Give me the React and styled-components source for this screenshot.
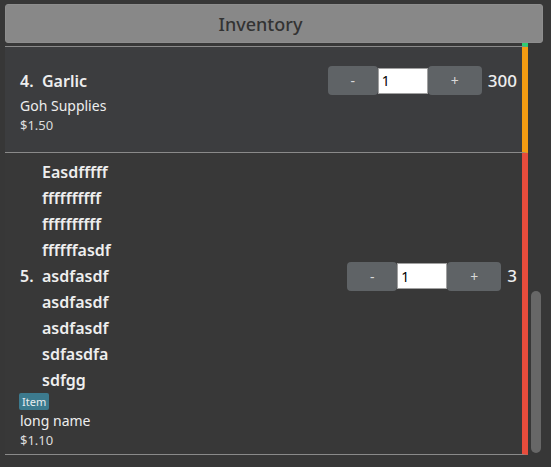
import { useLayoutEffect, useRef, useState } from 'react';
import styled, { createGlobalStyle } from 'styled-components';

const items = [
    { id: 1, name: 'Apples', tag: 'Fruit', supplier: 'Fresh Farm', price: '$0.80', qty: 120, color: '#2ecc71' },
    {
        id: 2,
        name: 'Tomato cherry vine sweet red round fresh ripe',
        tag: 'Item',
        supplier: 'Veg Mart',
        price: '$2.20',
        qty: 40,
        color: '#2ecc71',
    },
    {
        id: 3,
        name: 'Onion brown large sack bag of ten kilo',
        tag: 'Item',
        supplier: 'Goh Supplies',
        price: '$0.90',
        qty: 500,
        color: '#2ecc71',
    },
    { id: 4, name: 'Garlic', supplier: 'Goh Supplies', price: '$1.50', qty: 300, color: '#f39c12', active: true },
    {
        id: 5,
        name: 'Easdfffff ffffffffff ffffffffff ffffffasdf asdfasdf asdfasdf asdfasdf sdfasdfa sdfgg',
        tag: 'Item',
        supplier: 'long name',
        price: '$1.10',
        qty: 3,
        color: '#e74c3c',
    },
];

const INSET = 2;

export default function App() {
    const listRef = useRef(null);
    const [thumb, setThumb] = useState({ top: 0, height: 0 });

    function measure() {
        const list = listRef.current;
        const view = list.clientHeight;
        const track = view - INSET * 2;
        const height = Math.max(20, (track * view) / list.scrollHeight);
        const range = list.scrollHeight - view;
        const top = INSET + (range > 0 ? (list.scrollTop / range) * (track - height) : 0);
        setThumb({ top, height });
    }

    useLayoutEffect(() => {
        const list = listRef.current;
        list.scrollTop = list.scrollHeight;
        measure();
    }, []);

    return (
        <Page>
            <GlobalStyle />
            <Header>Inventory</Header>
            <ListFrame>
                <List ref={listRef} onScroll={measure}>
                    {items.map((item) => (
                        <Row key={item.id} $bar={item.color} $active={item.active}>
                            <Title>
                                <Index>{item.id}.</Index>
                                <Name>{item.name}</Name>
                                <Controls>
                                    <StepButton>-</StepButton>
                                    <Amount defaultValue="1" />
                                    <StepButton $wide>+</StepButton>
                                </Controls>
                                <Quantity>{item.qty}</Quantity>
                            </Title>
                            {item.tag && <Tag>{item.tag}</Tag>}
                            <Supplier>{item.supplier}</Supplier>
                            <Price>{item.price}</Price>
                        </Row>
                    ))}
                </List>
                <Thumb style={{ top: thumb.top, height: thumb.height }} />
            </ListFrame>
        </Page>
    );
}

const GlobalStyle = createGlobalStyle`
    body {
        margin: 0;
        background-color: #373737;
        font-family: "Segoe UI", "Noto Sans", sans-serif;
        color: #eeeeee;
    }
`;

const Page = styled.div`
    padding: 4px 8px 0 5px;
`;

const Header = styled.header`
    height: 39px;
    box-sizing: border-box;
    background-color: #888888;
    border: 1px solid #8e8e8e;
    border-radius: 3px;
    color: #333333;
    font-size: 18px;
    font-weight: 500;
    display: flex;
    align-items: center;
    justify-content: center;
    padding-right: 27px;
`;

const ListFrame = styled.div`
    position: relative;
    height: 412px;
`;

const List = styled.div`
    height: 100%;
    box-sizing: border-box;
    padding-right: 15px;
    overflow-y: scroll;
    scrollbar-width: none;
    &::-webkit-scrollbar {
        display: none;
    }
`;

const Thumb = styled.div`
    position: absolute;
    right: 2px;
    width: 10px;
    border-radius: 5px;
    background-color: #676767;
`;

const Row = styled.div`
    display: flex;
    flex-direction: column;
    justify-content: center;
    align-items: flex-start;
    box-sizing: border-box;
    min-height: 106px;
    padding: 6px 5px 5px 15px;
    background-color: ${(p) => (p.$active ? '#3c3d3f' : '#383838')};
    border-bottom: 1px solid #8a8a8a;
    border-right: 6px solid ${(p) => p.$bar};
`;

const Title = styled.div`
    align-self: stretch;
    display: flex;
    align-items: center;
    min-height: 29px;
    font-size: 16px;
    font-weight: 600;
    line-height: 26px;
`;

const Index = styled.span`
    width: 22px;
    flex-shrink: 0;
`;

const Name = styled.span`
    width: min-content;
`;

const Tag = styled.span`
    margin-left: -1px;
    padding: 0 3px;
    height: 17px;
    line-height: 17px;
    background-color: #3c7a8e;
    border-radius: 2px;
    color: #e8eef0;
    font-size: 11px;
`;

const Supplier = styled.div`
    font-size: 14px;
    line-height: 21px;
`;

const Price = styled.div`
    font-size: 13px;
    line-height: 18px;
    color: #dddddd;
`;

const Controls = styled.div`
    margin-left: auto;
    display: flex;
    align-items: center;
`;

const StepButton = styled.button`
    width: ${(p) => (p.$wide ? '54px' : '50px')};
    height: 29px;
    border: none;
    border-radius: 4px;
    background-color: #5f6366;
    color: #d8d8d8;
    font-size: 14px;
    font-family: inherit;
    cursor: pointer;
`;

const Amount = styled.input`
    width: 50px;
    height: 26px;
    box-sizing: border-box;
    border: 1px solid #a0a0a0;
    padding: 0 3px;
    font-size: 14px;
    font-family: inherit;
    color: #000000;
`;

const Quantity = styled.span`
    margin-left: 6px;
    font-size: 17px;
    font-weight: 500;
`;
